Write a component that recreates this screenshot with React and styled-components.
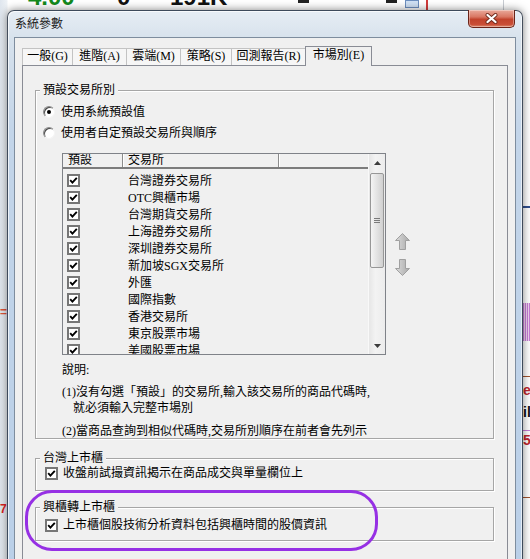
import React from "react";
import styled, { createGlobalStyle } from "styled-components";

const uiFont = `"Liberation Serif", "Noto Sans CJK TC", serif`;

const GlobalStyle = createGlobalStyle`
  html, body {
    margin: 0;
    padding: 0;
  }
  body {
    background: #fff;
    font-family: ${uiFont};
    color: #000;
  }
  * {
    box-sizing: border-box;
  }
`;

const tabs = [
  { label: "一般(G)", w: 51 },
  { label: "進階(A)", w: 55 },
  { label: "雲端(M)", w: 55 },
  { label: "策略(S)", w: 52 },
  { label: "回測報告(R)", w: 75 },
  { label: "市場別(E)", w: 67, active: true },
];

const exchanges = [
  "台灣證券交易所",
  "OTC興櫃市場",
  "台灣期貨交易所",
  "上海證券交易所",
  "深圳證券交易所",
  "新加坡SGX交易所",
  "外匯",
  "國際指數",
  "香港交易所",
  "東京股票市場",
  "美國股票市場",
];

// ---- the trading app behind the dialog ----
const Desktop = styled.div`
  position: relative;
  width: 530px;
  height: 559px;
  overflow: hidden;
  background: linear-gradient(to right, #dfe6ee 0, #eef2f6 7px, #fff 8px);
`;

const BackText = styled.span`
  position: absolute;
  left: ${(p) => p.x}px;
  top: ${(p) => p.y}px;
  font: bold ${(p) => p.size || 24}px/1 "Liberation Sans", sans-serif;
  color: ${(p) => p.color || "#111"};
  white-space: nowrap;
`;

const BackMark = styled.div`
  position: absolute;
  left: ${(p) => p.x}px;
  top: ${(p) => p.y}px;
  width: ${(p) => p.w}px;
  height: ${(p) => p.h}px;
  background: ${(p) => p.bg};
  border: ${(p) => p.border || "none"};
`;

// ---- dialog window ----
const Window = styled.div`
  position: absolute;
  left: 7px;
  top: 10px;
  width: 516px;
  height: 600px;
  border: 1px solid rgba(30, 40, 55, 0.8);
  border-radius: 7px 7px 0 0;
  background: linear-gradient(
    to bottom,
    #e6edf4 0,
    #d6e1ec 30px,
    #c3d5e9 120px,
    #b9cfe8 100%
  );
  box-shadow: 0 0 9px rgba(0, 0, 0, 0.5),
    inset 1px 1px 0 rgba(255, 255, 255, 0.7),
    inset -1px 0 0 rgba(255, 255, 255, 0.6);
  display: flex;
  flex-direction: column;
`;

const TitleBar = styled.div`
  height: 26px;
  display: flex;
  justify-content: space-between;
  align-items: flex-start;
  padding: 0 7px;
  flex: none;
`;

const Title = styled.div`
  font-size: 12px;
  line-height: 26px;
  color: #1a1a1a;
`;

const CloseButton = styled.div`
  width: 47px;
  height: 18px;
  margin-top: -1px;
  border: 1px solid #6b2418;
  border-top: none;
  border-radius: 0 0 5px 5px;
  background: linear-gradient(
    to bottom,
    #e9a99a 0,
    #d97763 40%,
    #c2432c 55%,
    #c94e36 85%,
    #de8a6e 100%
  );
  box-shadow: inset 0 0 0 1px rgba(255, 255, 255, 0.35);
  display: flex;
  align-items: center;
  justify-content: center;
`;

const Client = styled.div`
  flex: 1;
  margin: 0 6px;
  border: 1px solid #7e8d9e;
  background: #f0f0f0;
  padding: 8px 7px 0;
  display: flex;
  flex-direction: column;
`;

const TabStrip = styled.div`
  height: 19px;
  display: flex;
  align-items: flex-end;
  position: relative;
  z-index: 2;
  flex: none;
`;

const Tab = styled.div`
  width: ${(p) => p.w}px;
  height: ${(p) => (p.active ? 20 : 17)}px;
  margin-right: -1px;
  margin-bottom: ${(p) => (p.active ? -1 : 0)}px;
  border: 1px solid ${(p) => (p.active ? "#898c95" : "#c3c3c3")};
  border-bottom: none;
  background: ${(p) => (p.active ? "#f0f0f0" : "#f6f6f6")};
  font-size: 12px;
  line-height: ${(p) => (p.active ? 17 : 15)}px;
  text-align: center;
  white-space: nowrap;
  position: relative;
  z-index: ${(p) => (p.active ? 2 : 1)};
`;

const Panel = styled.div`
  flex: 1;
  border: 1px solid #898c95;
  padding: 24px 13px 0 12px;
  display: flex;
  flex-direction: column;
`;

const Group = styled.div`
  margin-top: ${(p) => p.gap || 0}px;
  border: 1px solid #a6a6a6;
  box-shadow: inset 1px 1px 0 #fff, 1px 1px 0 #fff;
  padding: 0 8px ${(p) => p.padBottom || 0}px 7px;
  font-size: 12px;
  line-height: 14px;
`;

const Legend = styled.div`
  width: fit-content;
  margin: -8px 0 0 -3px;
  padding: 0 3px;
  background: #f0f0f0;
  line-height: 14px;
`;

const RadioRow = styled.div`
  margin-top: ${(p) => p.gap}px;
  height: 18px;
  display: flex;
  align-items: center;
  gap: 6px;
`;

const Radio = styled.span`
  width: 12px;
  height: 12px;
  border-radius: 50%;
  background: #fff;
  border: 1px solid;
  border-color: #8a8a8a #f4f4f4 #f4f4f4 #8a8a8a;
  box-shadow: inset 1px 1px 0 #4a4a4a;
  display: flex;
  align-items: center;
  justify-content: center;
  flex: none;
  &::after {
    content: "";
    width: 4px;
    height: 4px;
    border-radius: 50%;
    background: ${(p) => (p.checked ? "#000" : "transparent")};
  }
`;

const ListArea = styled.div`
  margin: 11px 0 0 19px;
  display: flex;
  align-items: center;
  gap: 9px;
`;

const ListBox = styled.div`
  width: 324px;
  height: 202px;
  border: 1px solid #7f8288;
  background: #f0f0f0;
  display: flex;
`;

const ListMain = styled.div`
  flex: 1;
  overflow: hidden;
  display: flex;
  flex-direction: column;
`;

const HeaderRow = styled.div`
  height: 15px;
  display: grid;
  grid-template-columns: 60px 156px 1fr;
  border-bottom: 2px solid #7c7c7c;
  flex: none;
`;

const HeaderCell = styled.div`
  padding-left: 5px;
  line-height: 13px;
  border-right: ${(p) => (p.last ? "none" : "1px solid #8c8c8c")};
  box-shadow: ${(p) => (p.last ? "none" : "1px 0 0 #fff")};
`;

const Rows = styled.div`
  padding-top: 3px;
`;

const Row = styled.div`
  height: 17px;
  display: grid;
  grid-template-columns: 60px 1fr;
  align-items: center;
`;

const RowText = styled.span`
  padding-left: 5px;
  white-space: nowrap;
`;

const Check = styled.span`
  width: 13px;
  height: 13px;
  margin-left: ${(p) => p.inset || 0}px;
  border: 2px solid #767676;
  background: #fff;
  display: flex;
  align-items: center;
  justify-content: center;
  flex: none;
`;

const ScrollBar = styled.div`
  width: 17px;
  flex: none;
  display: flex;
  flex-direction: column;
  background: linear-gradient(to right, #e6e6e6, #f3f3f3 40%, #ececec);
  border-left: 1px solid #f8f8f8;
`;

const ScrollButton = styled.div`
  height: 17px;
  display: flex;
  align-items: center;
  justify-content: center;
  flex: none;
`;

const Thumb = styled.div`
  margin: 2px 1px 0 1px;
  height: 95px;
  border: 1px solid #979797;
  border-radius: 2px;
  background: linear-gradient(to right, #f4f4f4, #e4e4e4 45%, #d0d0d0);
  display: flex;
  align-items: center;
  justify-content: center;
`;

const Spacer = styled.div`
  flex: 1;
`;

const MoveButtons = styled.div`
  display: flex;
  flex-direction: column;
  gap: 9px;
`;

const Notes = styled.div`
  margin: 8px 0 0 19px;
  display: flex;
  flex-direction: column;
`;

const NoteLine = styled.div`
  margin-top: ${(p) => p.gap || 0}px;
  padding-left: ${(p) => p.indent || 0}px;
  white-space: nowrap;
`;

const CheckRow = styled.div`
  margin: ${(p) => p.gap}px 0 0 2px;
  height: 14px;
  display: flex;
  align-items: center;
  gap: 5px;
  white-space: nowrap;
`;

const Annotation = styled.div`
  position: absolute;
  left: 25px;
  top: 490px;
  width: 353px;
  height: 61px;
  border: 3px solid #9630e4;
  border-radius: 27px;
  pointer-events: none;
`;

const CheckMark = () => (
  <svg width="9" height="9" viewBox="0 0 9 9">
    <path d="M1.2 4.2 L3.4 6.6 L7.8 1.8" fill="none" stroke="#000" strokeWidth="1.9" />
  </svg>
);

const CloseGlyph = () => (
  <svg width="13" height="11" viewBox="0 0 13 11">
    <path d="M2.5 2 L10.5 9 M10.5 2 L2.5 9" stroke="#6e2a1c" strokeWidth="4" strokeLinecap="round" />
    <path d="M2.5 2 L10.5 9 M10.5 2 L2.5 9" stroke="#fff" strokeWidth="2.3" strokeLinecap="round" />
  </svg>
);

const ScrollArrow = ({ down }) => (
  <svg width="7" height="4" viewBox="0 0 7 4">
    <path d={down ? "M0 0 L7 0 L3.5 4 Z" : "M0 4 L7 4 L3.5 0 Z"} fill="#3c3c3c" />
  </svg>
);

const Grip = () => (
  <svg width="6" height="6" viewBox="0 0 6 6">
    <path d="M0 0.5 H6 M0 2.5 H6 M0 4.5 H6" stroke="#7a7a7a" strokeWidth="1" />
  </svg>
);

const MoveArrow = ({ down }) => (
  <svg width="15" height="17" viewBox="0 0 15 17">
    <defs>
      <linearGradient id={down ? "mvDown" : "mvUp"} x1="0" y1="0" x2="1" y2="0">
        <stop offset="0" stopColor="#dcdcdc" />
        <stop offset="1" stopColor="#a9a9a9" />
      </linearGradient>
    </defs>
    <path
      d={
        down
          ? "M7.5 16.5 L14.5 9.5 L10.5 9.5 L10.5 0.5 L4.5 0.5 L4.5 9.5 L0.5 9.5 Z"
          : "M7.5 0.5 L14.5 7.5 L10.5 7.5 L10.5 16.5 L4.5 16.5 L4.5 7.5 L0.5 7.5 Z"
      }
      fill={`url(#${down ? "mvDown" : "mvUp"})`}
      stroke="#a0a0a0"
      strokeWidth="1"
      strokeLinejoin="round"
    />
  </svg>
);

const Backdrop = () => (
  <>
    <BackText x={20} y={-15} color="#138a1c">-4.00</BackText>
    <BackText x={117} y={-15}>0</BackText>
    <BackText x={170} y={-15}>191K</BackText>
    <BackMark x={298} y={0} w={11} h={3} bg="#222" />
    <BackMark x={386} y={0} w={11} h={3} bg="#222" />
    <BackMark x={405} y={0} w={14} h={8} bg="#cfe0f4" border="1px solid #6d8fbf" />
    <BackMark x={426} y={0} w={2} h={10} bg="#d23b3b" />
    <BackMark x={503} y={0} w={1} h={10} bg="#c8ccd2" />
    <BackMark x={523} y={206} w={7} h={2} bg="#2f4f8f" />
    <BackMark x={523} y={303} w={7} h={38} bg="repeating-linear-gradient(to right, #c77bd6 0 1px, #f2d6f2 1px 2px)" />
    <BackMark x={523} y={376} w={7} h={1} bg="#a0522d" />
    <BackText x={523} y={383} size={14} color="#c0262d">e</BackText>
    <BackText x={523} y={405} size={14} color="#111">il</BackText>
    <BackMark x={523} y={430} w={7} h={1} bg="#c77bd6" />
    <BackText x={523} y={433} size={14} color="#c0262d">50</BackText>
    <BackMark x={523} y={497} w={7} h={1} bg="#a0522d" />
    <BackText x={0} y={306} size={12} color="#e0553a">=</BackText>
    <BackText x={0} y={503} size={12} color="#d22">7</BackText>
  </>
);

const App = () => (
  <>
    <GlobalStyle />
    <Desktop>
      <Backdrop />
      <Window>
        <TitleBar>
          <Title>系統參數</Title>
          <CloseButton>
            <CloseGlyph />
          </CloseButton>
        </TitleBar>
        <Client>
          <TabStrip>
            {tabs.map((t) => (
              <Tab key={t.label} w={t.w} active={t.active}>
                {t.label}
              </Tab>
            ))}
          </TabStrip>
          <Panel>
            <Group padBottom={0}>
              <Legend>預設交易所別</Legend>
              <RadioRow gap={6}>
                <Radio checked />
                使用系統預設值
              </RadioRow>
              <RadioRow gap={3}>
                <Radio />
                使用者自定預設交易所與順序
              </RadioRow>
              <ListArea>
                <ListBox>
                  <ListMain>
                    <HeaderRow>
                      <HeaderCell>預設</HeaderCell>
                      <HeaderCell>交易所</HeaderCell>
                      <HeaderCell last />
                    </HeaderRow>
                    <Rows>
                      {exchanges.map((name) => (
                        <Row key={name}>
                          <Check inset={4}>
                            <CheckMark />
                          </Check>
                          <RowText>{name}</RowText>
                        </Row>
                      ))}
                    </Rows>
                  </ListMain>
                  <ScrollBar>
                    <ScrollButton>
                      <ScrollArrow />
                    </ScrollButton>
                    <Thumb>
                      <Grip />
                    </Thumb>
                    <Spacer />
                    <ScrollButton>
                      <ScrollArrow down />
                    </ScrollButton>
                  </ScrollBar>
                </ListBox>
                <MoveButtons>
                  <MoveArrow />
                  <MoveArrow down />
                </MoveButtons>
              </ListArea>
              <Notes>
                <NoteLine>說明:</NoteLine>
                <NoteLine gap={8}>(1)沒有勾選「預設」的交易所,輸入該交易所的商品代碼時,</NoteLine>
                <NoteLine gap={2} indent={11}>就必須輸入完整市場別</NoteLine>
                <NoteLine gap={9}>(2)當商品查詢到相似代碼時,交易所別順序在前者會先列示</NoteLine>
              </Notes>
            </Group>
            <Group gap={19} padBottom={10}>
              <Legend>台灣上市櫃</Legend>
              <CheckRow gap={1}>
                <Check>
                  <CheckMark />
                </Check>
                收盤前試撮資訊揭示在商品成交與單量欄位上
              </CheckRow>
            </Group>
            <Group gap={16} padBottom={8}>
              <Legend>興櫃轉上市櫃</Legend>
              <CheckRow gap={4}>
                <Check>
                  <CheckMark />
                </Check>
                上市櫃個股技術分析資料包括興櫃時間的股價資訊
              </CheckRow>
            </Group>
          </Panel>
        </Client>
      </Window>
      <Annotation />
    </Desktop>
  </>
);

export default App;
